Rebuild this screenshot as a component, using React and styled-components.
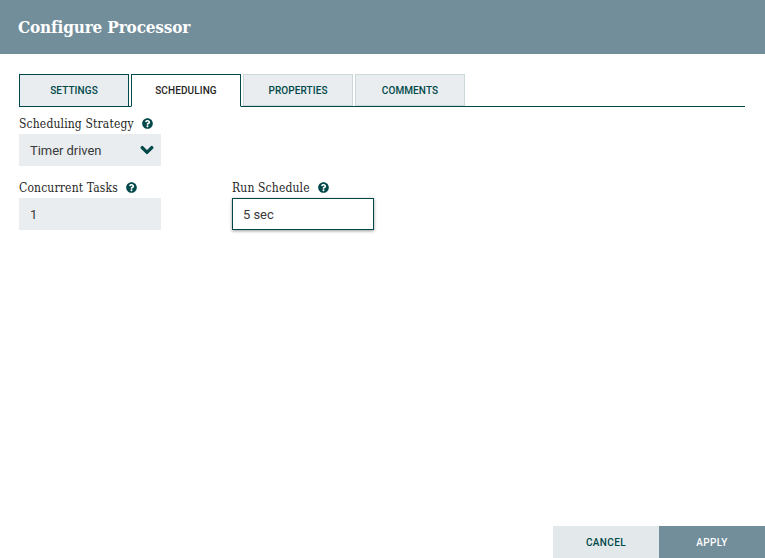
import styled, { createGlobalStyle } from "styled-components";
import { FaQuestionCircle, FaChevronDown } from "react-icons/fa";

const GlobalStyle = createGlobalStyle`
  html, body {
    margin: 0;
    padding: 0;
    background: #fff;
  }
  * {
    box-sizing: border-box;
  }
`;

const Dialog = styled.div`
  width: 100%;
  height: 100vh;
  display: flex;
  flex-direction: column;
  font-family: Roboto, sans-serif;
`;

const Header = styled.header`
  height: 54px;
  flex-shrink: 0;
  background: #728e9b;
  color: #fff;
  padding-left: 18px;
  display: flex;
  align-items: center;
  font-family: "DejaVu Serif Condensed", "DejaVu Serif", serif;
  font-size: 17px;
  font-weight: 700;
  letter-spacing: -0.15px;
`;

const Content = styled.main`
  flex: 1;
  padding: 20px 20px 0 19px;
`;

const TabBar = styled.div`
  display: flex;
  gap: 2px;
  height: 33px;
  border-bottom: 1px solid #004849;
`;

const Tab = styled.div`
  width: 110px;
  height: ${({ $state }) => ($state === "rest" ? "32px" : "33px")};
  display: flex;
  align-items: center;
  justify-content: center;
  padding-bottom: ${({ $state }) => ($state === "rest" ? "0" : "1px")};
  font-size: 10px;
  font-weight: 500;
  letter-spacing: 0.1px;
  color: ${({ $state }) => ($state === "active" ? "#262626" : "#004849")};
  background: ${({ $state }) => ($state === "active" ? "#fff" : "#e9edf0")};
  border: 1px solid
    ${({ $state }) => ($state === "rest" ? "#cdd8db" : "#004849")};
  border-bottom-color: ${({ $state }) =>
    $state === "active" ? "#fff" : $state === "rest" ? "#cdd8db" : "#004849"};
`;

const Form = styled.div`
  padding-top: 9px;
  display: flex;
  flex-direction: column;
  gap: 14px;
`;

const FieldRow = styled.div`
  display: flex;
  gap: 71px;
`;

const Field = styled.div`
  width: 142px;
`;

const Label = styled.div`
  height: 15px;
  margin-bottom: 3px;
  display: flex;
  align-items: center;
  gap: 8px;
  font-family: "DejaVu Serif Condensed", "DejaVu Serif", serif;
  font-size: 12px;
  letter-spacing: 0.15px;
  color: #262626;
  white-space: nowrap;

  svg {
    width: 11px;
    height: 11px;
    color: #004849;
    flex-shrink: 0;
  }
`;

const Value = styled.div`
  height: 32px;
  padding: 0 ${({ $focused }) => ($focused ? "10px" : "11px")};
  display: flex;
  align-items: center;
  justify-content: space-between;
  font-size: 13px;
  letter-spacing: -0.05px;
  color: #3a3a3a;
  background: ${({ $focused }) => ($focused ? "#fff" : "#e9edf0")};
  border: ${({ $focused }) => ($focused ? "1px solid #004849" : "none")};
  box-shadow: ${({ $focused }) =>
    $focused ? "0 1px 3px rgba(0, 0, 0, 0.4)" : "none"};
`;

const Chevron = styled(FaChevronDown)`
  width: 14px;
  height: 14px;
  color: #004849;
  margin-right: -4px;
  stroke: #004849;
  stroke-width: 40px;
`;

const Footer = styled.footer`
  height: 32px;
  flex-shrink: 0;
  display: flex;
  justify-content: flex-end;
`;

const Button = styled.div`
  width: 106px;
  display: flex;
  align-items: center;
  justify-content: center;
  font-size: 10px;
  font-weight: 500;
  letter-spacing: 0.4px;
  color: ${({ $primary }) => ($primary ? "#fff" : "#004849")};
  background: ${({ $primary }) => ($primary ? "#728e9b" : "#e3e8eb")};
`;

const App = () => {
  return (
    <Dialog>
      <GlobalStyle />
      <Header>Configure Processor</Header>
      <Content>
        <TabBar>
          <Tab $state="focused">SETTINGS</Tab>
          <Tab $state="active">SCHEDULING</Tab>
          <Tab $state="rest">PROPERTIES</Tab>
          <Tab $state="rest">COMMENTS</Tab>
        </TabBar>
        <Form>
          <Field>
            <Label>
              Scheduling Strategy <FaQuestionCircle />
            </Label>
            <Value>
              Timer driven <Chevron />
            </Value>
          </Field>
          <FieldRow>
            <Field>
              <Label>
                Concurrent Tasks <FaQuestionCircle />
              </Label>
              <Value>1</Value>
            </Field>
            <Field>
              <Label>
                Run Schedule <FaQuestionCircle />
              </Label>
              <Value $focused>5 sec</Value>
            </Field>
          </FieldRow>
        </Form>
      </Content>
      <Footer>
        <Button>CANCEL</Button>
        <Button $primary>APPLY</Button>
      </Footer>
    </Dialog>
  );
};

export default App;
